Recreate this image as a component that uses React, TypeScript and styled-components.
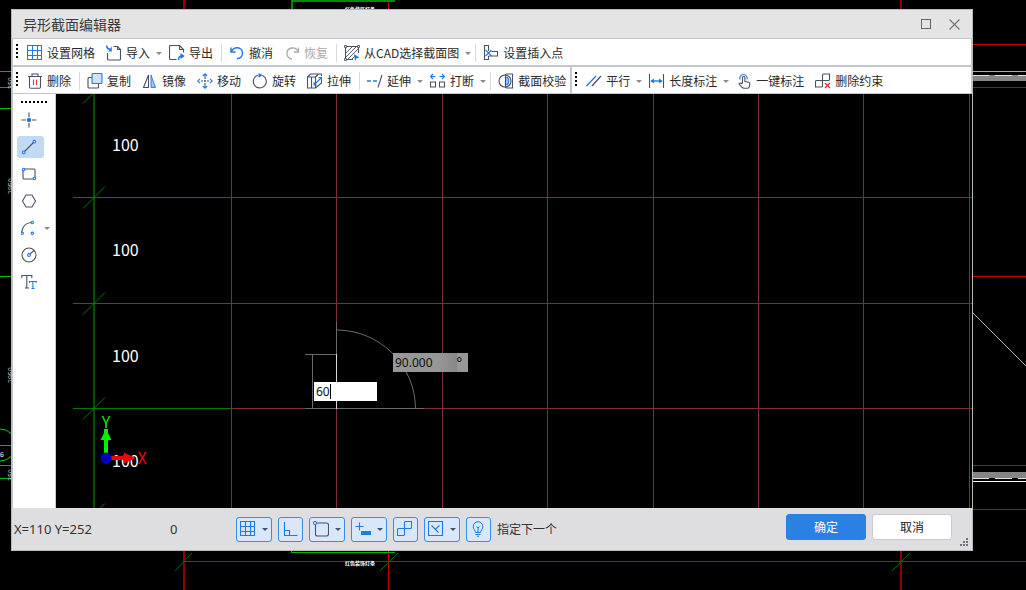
import React from "react";
import styled, { createGlobalStyle, css } from "styled-components";

const GlobalStyle = createGlobalStyle`
  * { box-sizing: border-box; }
  body {
    margin: 0;
    background: #000;
    color: #2b2b2b;
    font-family: "Noto Sans CJK SC", "Noto Sans", sans-serif;
    font-size: 12px;
    line-height: 16px;
  }
  button, input { font: inherit; color: inherit; }
`;

const INK = "#4a5166";
const BLUE = "#1f7ae6";
const RED = "#d9303a";

/* ---------- page and dialog ---------- */

const Desktop = styled.div`
  position: relative;
  display: flex;
  min-height: 100vh;
  padding: 9px 53px 39px 11px;
  overflow: hidden;
`;

const DrawingBehind = styled.svg`
  position: absolute;
  inset: 0;
  width: 100%;
  height: 100%;
`;

const Dialog = styled.section`
  position: relative;
  flex: 1;
  min-width: 0;
  display: flex;
  flex-direction: column;
  background: #dedee0;
  border: 1px solid #b9babd;
`;

const TitleBar = styled.header`
  display: flex;
  align-items: center;
  height: 29px;
  padding: 0 4px 0 11px;
  background: #e4e4e4;
  border-bottom: 1px solid #c3c5ca;
`;

const Title = styled.h1`
  flex: 1;
  margin: 0;
  font-size: 14px;
  line-height: 20px;
  font-weight: 400;
  color: #3a3a3a;
`;

const WindowButton = styled.button`
  display: flex;
  align-items: center;
  justify-content: center;
  width: 28px;
  height: 24px;
  padding: 0;
  border: 0;
  background: none;
`;

/* ---------- toolbars ---------- */

const Toolbars = styled.div`
  border: solid #c3c6cc;
  border-width: 0 1px 1px;
  background: #fff;
`;

const ToolbarRow = styled.div`
  display: flex;
  height: 26px;
  overflow: hidden;
  & + & {
    height: 28px;
    border-top: 2px solid #c3c6cc;
  }
`;

const ToolGroup = styled.div`
  display: flex;
  align-items: center;
  gap: 3px;
  padding: 2px 0 0 3px;
  & + & { border-left: 2px solid #c3c6cc; }
`;

const Grip = styled.span<{ $horizontal?: boolean }>`
  flex: none;
  ${(p) =>
    p.$horizontal
      ? css`
          width: 26px;
          height: 2px;
          margin: 0 0 1px 4px;
          background: repeating-linear-gradient(90deg, #000 0 2px, transparent 2px 4px);
        `
      : css`
          width: 2px;
          height: 14px;
          margin: 0 2px 5px 0;
          background: repeating-linear-gradient(#000 0 2px, transparent 2px 4px);
        `}
`;

const Tool = styled.button`
  display: flex;
  flex: none;
  align-items: center;
  gap: 4px;
  padding: 0 4px;
  border: 0;
  background: none;
  white-space: nowrap;
  &:disabled { color: #a9a9a9; }
`;

const Split = styled.span`
  display: flex;
  flex: none;
  align-items: center;
`;

const CaretButton = styled.button`
  display: flex;
  align-items: center;
  justify-content: flex-end;
  width: 8px;
  height: 16px;
  padding: 0;
  border: 0;
  background: none;
`;

const Caret = styled.span<{ $dark?: boolean }>`
  border: 3px solid transparent;
  border-top-color: ${(p) => (p.$dark ? "#4a5166" : "#8b8b8b")};
  border-bottom: 0;
`;

const Divider = styled.span`
  flex: none;
  width: 1px;
  height: 18px;
  margin-left: 1px;
  background: #d9d9d9;
`;

/* ---------- work area ---------- */

const Work = styled.div`
  flex: 1;
  display: flex;
  min-height: 0;
  padding-left: 1px;
  background: #c3c6cc;
`;

const Palette = styled.nav`
  display: flex;
  flex: none;
  flex-direction: column;
  gap: 5px;
  width: 43px;
  padding: 7px 0 0 4px;
  background: #fff;
  border-right: 1px solid #ccc;
`;

const PaletteTool = styled.button<{ $active?: boolean }>`
  display: flex;
  align-items: center;
  justify-content: center;
  width: 27px;
  height: 22px;
  padding: 0 3px 0 0;
  border: 0;
  border-radius: 3px;
  background: ${(p) => (p.$active ? "#c1d9f2" : "none")};
`;

const Stage = styled.div`
  position: relative;
  flex: 1;
  display: flex;
  min-width: 0;
  background: #000;
`;

const StageDrawing = styled.svg`
  flex: 1;
  min-width: 0;
  height: auto;
  font-family: "Noto Sans CJK SC", "Noto Sans", sans-serif;
`;

const LengthField = styled.label`
  position: absolute;
  left: 258px;
  top: 288px;
  display: flex;
  width: 63px;
  height: 19px;
  background: #fff;
`;

const AngleField = styled.label`
  position: absolute;
  left: 337px;
  top: 259px;
  display: flex;
  width: 75px;
  height: 19px;
  background: linear-gradient(90deg, #979797 0 45px, #878787 64px, #979797 64px);
  color: #111;
`;

const FieldInput = styled.input`
  width: 100%;
  min-width: 0;
  padding: 0 2px;
  border: 0;
  outline: 0;
  background: none;
  color: #111;
  font-family: "Noto Sans", sans-serif;
`;

const TextCursor = styled.span`
  position: absolute;
  left: 16px;
  top: 2px;
  width: 1px;
  height: 15px;
  background: #000;
`;

const Unit = styled.span`
  width: 14px;
  font-family: "Noto Sans", sans-serif;
  font-size: 14px;
  line-height: 20px;
`;

/* ---------- footer ---------- */

const Footer = styled.footer`
  display: flex;
  align-items: center;
  height: 42px;
  padding: 0 20px 0 2px;
  color: #333;
`;

const Readout = styled.output<{ $width: number }>`
  flex: none;
  width: ${(p) => p.$width}px;
  font-family: "Noto Sans", sans-serif;
  font-size: 13px;
`;

const Toggles = styled.div`
  display: flex;
  gap: 6px;
  align-items: center;
`;

const Toggle = styled.button<{ $menu?: boolean }>`
  display: flex;
  flex: none;
  align-items: center;
  justify-content: space-between;
  width: ${(p) => (p.$menu ? 36 : 25)}px;
  height: 25px;
  padding: 0 3px;
  border: 1px solid #3a8bea;
  border-radius: 3px;
  background: #d9e7fb;
`;

const Actions = styled.div`
  display: flex;
  gap: 6px;
  margin: 0 0 4px auto;
`;

const Action = styled.button<{ $primary?: boolean }>`
  width: 80px;
  height: 26px;
  padding: 0;
  border: 1px solid ${(p) => (p.$primary ? "#2b80e4" : "#cbcbcd")};
  border-radius: 3px;
  background: ${(p) => (p.$primary ? "#2b80e4" : "#fff")};
  color: ${(p) => (p.$primary ? "#fff" : "#222")};
`;

const SizeGrip = styled.svg`
  position: absolute;
  right: 3px;
  bottom: 3px;
`;

/* ---------- icons ---------- */

const IconSvg = styled.svg`
  flex: none;
  fill: none;
  stroke: ${INK};
  stroke-width: 1.1;
`;

const Icon = ({ children, size = 16 }: { children: React.ReactNode; size?: number }) => (
  <IconSvg width={size} height={size} viewBox={`0 0 ${size} ${size}`} aria-hidden="true">
    {children}
  </IconSvg>
);

const icons = {
  grid: <path stroke={BLUE} d="M.5.5h14v14H.500zM.5 5.500h14M.5 10.500h14M5.500.5v14M10.500.5v14" />,
  importFile: (
    <>
      <path d="M7.500 1.500h4l3 3V14a1 1 0 0 1-1 1h-11a1 1 0 0 1-1-1V8M11.500 1.500v3h3" />
      <path stroke={BLUE} strokeWidth="1.500" d="M.7.500C.7 3 2 4 4 4" />
      <path fill={BLUE} stroke="none" d="M2.500 6.500L5.800 1.200V6.500z" />
    </>
  ),
  exportFile: (
    <>
      <path d="M7.500 14.500h-6a1 1 0 0 1-1-1v-12a1 1 0 0 1 1-1h9l4 4v3M10.500.5v4h4" />
      <path stroke={BLUE} strokeWidth="1.500" d="M9.500 15c0-3 1-4 3.500-4" />
      <path fill={BLUE} stroke="none" d="M11.500 8l4.300 3-4.300 3z" />
    </>
  ),
  undo: <path stroke={BLUE} strokeWidth="1.400" d="M2 2.500V7h4.500M2 7c1.500-3 4-4.300 6.500-4.200 3 .2 5 2.500 5 5.200 0 3-2.200 5.300-5.500 5.800" />,
  redo: <path stroke="#a9a9a9" strokeWidth="1.300" d="M14.500 2.500V7H10M14.500 7C13 4 10.500 2.700 8 3 5 3.300 3 5.500 3 8.200c0 3 2.200 5.300 5 5.800" />,
  pickSection: (
    <>
      <path d="M3 1.500h10M1.500 3v10M14.500 3v5M3 14.500h6" />
      <path strokeWidth=".9" d="M2 8l6-6M2 12l10-10M4 14L14 4M8 14l3-3" />
      <path fill="#fff" strokeWidth=".9" d="M.5.5h2v2h-2zM13.500.5h2v2h-2zM.5 13.500h2v2h-2z" />
      <path fill={BLUE} stroke="none" d="M10 9l5.500 3.500-3 .8-1.500 2.700z" />
    </>
  ),
  insertPoint: (
    <>
      <path d="M5.500 6V.5h-4v14h4V11M5.500 11h9V6.500h-6" />
      <path stroke={BLUE} d="M2.500 5l6 6M8.500 5l-6 6" />
    </>
  ),
  trash: (
    <>
      <path d="M1 3.500h14M5 3.500V1h6v2.500M2.500 3.500V14a1.200 1.200 0 0 0 1.200 1.200h8.600a1.200 1.200 0 0 0 1.200-1.200V3.500" />
      <path stroke={RED} d="M6.500 6.500V12M9.500 6.500V12" />
    </>
  ),
  copy: (
    <>
      <path d="M5 4.500H2a1 1 0 0 0-1 1V14a1 1 0 0 0 1 1h8.500a1 1 0 0 0 1-1v-3" />
      <rect x="5" y=".5" width="10" height="10" rx="1" fill="#cfe2fa" stroke={BLUE} />
    </>
  ),
  mirror: (
    <>
      <path d="M6.500 2v12.500H1.500z" />
      <path fill="#9cc4f5" stroke={BLUE} strokeWidth=".9" d="M9 2v12.500h4.500z" />
    </>
  ),
  move: (
    <>
      <path strokeDasharray="2 1" d="M8 4v8M4 8h8" />
      <path stroke={BLUE} d="M5.800 3L8 .8 10.200 3M5.800 13L8 15.200 10.200 13M3 5.800L.8 8 3 10.200M13 5.800L15.200 8 13 10.200M8 1v3M8 12v3" />
    </>
  ),
  rotate: (
    <>
      <path d="M6 2.200A6.500 6.500 0 1 0 10.500 2.500" />
      <path fill={BLUE} stroke="none" d="M6.500 0l4.500 2.300-4.500 2.500z" />
    </>
  ),
  stretch: (
    <>
      <path d="M.5 4h8v11h-8zM.5 4l3-3h11v2M8.500 4l3-3M4.500 4v11M8.500 15l6-5V5" />
      <path stroke={BLUE} d="M7 12l7-7M11.500 4.500h3v3M7 9v3h3" />
    </>
  ),
  extend: (
    <>
      <path stroke={BLUE} d="M0 8h4M6 8h4" strokeWidth="1.400" />
      <path d="M11 14.500L15 2" />
    </>
  ),
  breakApart: (
    <>
      <path d="M.5 9h5v5h-5zM9.500 9h5v5h-5z" />
      <path stroke={BLUE} d="M5.500 3.500h-5M3 1L.6 3.500 3 6M9.500 3.500h5M12 1l2.400 2.500L12 6" />
    </>
  ),
  verify: (
    <>
      <path d="M8 1h6.500v14H8" />
      <circle cx="7" cy="8" r="6" />
      <path fill="#9cc4f5" stroke={BLUE} d="M7.500 4c4.500.5 4.500 7.500 0 8z" />
      <path d="M7.500 1v14" />
    </>
  ),
  parallel: (
    <>
      <path stroke={BLUE} d="M.5 13L10 3" strokeWidth="1.300" />
      <path d="M6 13l9-10" strokeWidth="1.300" />
    </>
  ),
  lengthDim: (
    <>
      <path d="M.5 1v14M14.500 1v14" />
      <path stroke={BLUE} d="M2 8h11" strokeWidth="1.400" />
      <path fill={BLUE} stroke="none" d="M1.500 8L5 5.500v5zM13.500 8L10 5.500v5z" />
    </>
  ),
  oneClick: (
    <>
      <path stroke={BLUE} d="M4 6.500a3.700 3.700 0 1 1 7-.2" />
      <path d="M6.500 10V4.500a1.200 1.200 0 0 1 2.400 0v4l4 .8c.8.200 1 .7 1 1.400l-.6 3c-.2.800-.7 1.500-1.600 1.500H8c-1 0-1.600-.3-2.200-1L3 11c.8-1.300 2.500-1 3.500 0" />
    </>
  ),
  removeConstraint: (
    <>
      <path d="M7.500 7.500V2a1 1 0 0 1 1-1h6v5.500a1 1 0 0 1-1 1H1.500a1 1 0 0 0-1 1V14h6a1 1 0 0 0 1-1z" />
      <path stroke="#fff" strokeWidth="3" d="M10 10l5 5M15 10l-5 5" />
      <path stroke={RED} strokeWidth="1.400" d="M10 10l5 5M15 10l-5 5" />
    </>
  ),
  point: (
    <>
      <path d="M8 .5V5M8 11v4.500M.5 8H5M11 8h4.500" />
      <circle cx="8" cy="8" r="2.200" fill={BLUE} stroke="none" />
    </>
  ),
  line: (
    <>
      <path d="M3.500 12.500l9-9" />
      <g stroke={BLUE} fill="#fff"><circle cx="2.700" cy="13.300" r="1.300" /><circle cx="13.300" cy="2.700" r="1.300" /></g>
    </>
  ),
  rectangle: (
    <>
      <rect x="2" y="3" width="12" height="10" rx="1" />
      <g stroke={BLUE} fill="#fff"><circle cx="2.700" cy="3.500" r="1.200" /><circle cx="13.300" cy="12.500" r="1.200" /></g>
    </>
  ),
  polygon: <path d="M5 2h6l3.500 6-3.500 6H5L1.500 8z" />,
  arc: (
    <>
      <path d="M.7 12C1.500 6.500 4.500 3 10 2.500" />
      <g stroke={BLUE} fill="#fff"><circle cx="1.200" cy="13.300" r="1.200" /><circle cx="11.300" cy="2.500" r="1.200" /><circle cx="11.300" cy="13.300" r="1.200" /></g>
    </>
  ),
  circle: (
    <>
      <circle cx="8" cy="8" r="7" />
      <path d="M9 7l4-3.500" />
      <circle cx="8" cy="8" r="1.400" fill="#fff" stroke={BLUE} />
    </>
  ),
  text: (
    <>
      <path d="M.8 4V1.500h10V4M5.800 1.500v12.500M4 14h4" />
      <path stroke={BLUE} d="M8.500 9V7.500h6.700V9M11.900 7.500v7M10.500 14.500h3" />
    </>
  ),
  ortho: <path stroke={BLUE} d="M2.500 1v13.500h13M2.500 9.500h5v5" />,
  snap: (
    <>
      <rect x="2.500" y="2" width="13" height="13" rx="2" />
      <circle cx="2" cy="2" r="1.500" stroke={BLUE} fill="#fff" />
    </>
  ),
  dynamicInput: (
    <>
      <path stroke={BLUE} d="M.5 5.500h8M4.500 1.500v8" />
      <rect x="6" y="10" width="10" height="4" fill={BLUE} stroke="none" />
    </>
  ),
  constraint: <path stroke={BLUE} d="M7.500 7.500v-6a1 1 0 0 1 1-1h6v6a1 1 0 0 1-1 1h-12a1 1 0 0 0-1 1v6h6a1 1 0 0 0 1-1z" />,
  track: <path stroke={BLUE} d="M.5.5h14v14H.500zM3.500 4.500l7 7M11.500 4.500l-4.500 4" />,
  bulb: <path stroke={BLUE} strokeWidth="1" d="M5.500 11.500C5.500 9.500 3.200 8.500 3.200 5.500a4.800 4.800 0 0 1 9.600 0c0 3-2.300 4-2.300 6zM5.500 13.500h5M7 15.200h2M6.500 5.500L8 7l1.500-1.500M8 7v4" />,
};

type IconName = keyof typeof icons;

interface ToolSpec {
  icon?: IconName;
  label?: string;
  menu?: boolean;
  disabled?: boolean;
}

const DIVIDER: ToolSpec = {};

const fileTools: ToolSpec[] = [
  { icon: "grid", label: "设置网格" },
  { icon: "importFile", label: "导入", menu: true },
  { icon: "exportFile", label: "导出" },
  DIVIDER,
  { icon: "undo", label: "撤消" },
  { icon: "redo", label: "恢复", disabled: true },
  DIVIDER,
  { icon: "pickSection", label: "从CAD选择截面图", menu: true },
  DIVIDER,
  { icon: "insertPoint", label: "设置插入点" },
];

const editTools: ToolSpec[] = [
  { icon: "trash", label: "删除" },
  DIVIDER,
  { icon: "copy", label: "复制" },
  { icon: "mirror", label: "镜像" },
  { icon: "move", label: "移动" },
  { icon: "rotate", label: "旋转" },
  { icon: "stretch", label: "拉伸" },
  DIVIDER,
  { icon: "extend", label: "延伸", menu: true },
  { icon: "breakApart", label: "打断", menu: true },
  DIVIDER,
  { icon: "verify", label: "截面校验" },
];

const constraintTools: ToolSpec[] = [
  { icon: "parallel", label: "平行", menu: true },
  { icon: "lengthDim", label: "长度标注", menu: true },
  { icon: "oneClick", label: "一键标注" },
  { icon: "removeConstraint", label: "删除约束" },
];

const paletteTools: { icon: IconName; label: string; menu?: boolean }[] = [
  { icon: "point", label: "点" },
  { icon: "line", label: "直线" },
  { icon: "rectangle", label: "矩形" },
  { icon: "polygon", label: "多边形" },
  { icon: "arc", label: "圆弧", menu: true },
  { icon: "circle", label: "圆" },
  { icon: "text", label: "文字" },
];

const statusToggles: { icon: IconName; label: string; menu?: boolean }[] = [
  { icon: "grid", label: "网格", menu: true },
  { icon: "ortho", label: "正交" },
  { icon: "snap", label: "捕捉", menu: true },
  { icon: "dynamicInput", label: "动态输入", menu: true },
  { icon: "constraint", label: "约束" },
  { icon: "track", label: "追踪", menu: true },
  { icon: "bulb", label: "提示" },
];

const ToolList = ({ tools }: { tools: ToolSpec[] }) => (
  <ToolGroup>
    <Grip />
    {tools.map((tool, i) =>
      tool.icon ? (
        <Split key={i}>
          <Tool disabled={tool.disabled}>
            <Icon>{icons[tool.icon]}</Icon>
            {tool.label}
          </Tool>
          {tool.menu && (
            <CaretButton aria-label={`${tool.label}选项`}>
              <Caret />
            </CaretButton>
          )}
        </Split>
      ) : (
        <Divider key={i} />
      )
    )}
  </ToolGroup>
);

/* ---------- CAD drawings ---------- */

const CELL = 105.4;
const columns = Array.from({ length: 20 }, (_, i) => Math.round(175 + i * CELL) + 0.5);
const rows = Array.from({ length: 12 }, (_, i) => Math.round(-2 + i * CELL) + 0.5);
const labelledRows = rows.slice(0, 4);

const SectionDrawing = () => (
  <StageDrawing aria-label="截面绘图区">
    <g stroke="#7a3034" shapeRendering="crispEdges">
      {columns.map((x) => <line key={x} x1={x} x2={x} y1="0" y2="100%" />)}
      {rows.map((y) => <line key={y} x1="175" x2="100%" y1={y} y2={y} />)}
    </g>
    <line x1="38" x2="38" y1="0" y2="100%" stroke="#005000" strokeWidth="2" />
    {rows.map((y) => (
      <g key={y} stroke="#007c00">
        <line x1="17" x2="175" y1={y} y2={y} shapeRendering="crispEdges" />
        <line x1="27" x2="49" y1={y + 11} y2={y - 11} />
      </g>
    ))}
    <g fill="#fff" fontSize="16">
      {labelledRows.map((y) => <text key={y} x="56" y={y + 58}>100</text>)}
    </g>

    <g stroke="#6a6a6a" fill="none">
      <path shapeRendering="crispEdges" d="M280.500 228v32M249 260.500h32M256.500 260v55M249 314.500h119" />
      <path d="M280.500 236a79 79 0 0 1 79 79" />
      <path stroke="#d8d8d8" shapeRendering="crispEdges" d="M280.500 260v55" />
    </g>

    <path d="M48 335h4v30h-4z" fill="#00f000" />
    <path d="M50 335l5.500 11h-11z" fill="#00f000" />
    <path d="M52 362h16v4H52z" fill="#f00000" />
    <path d="M68 358.500l12 5.500-12 5.500z" fill="#f00000" />
    <circle cx="50" cy="364" r="5.500" fill="#0000c0" />
    <text x="50" y="334" fontSize="16" textAnchor="middle" fill="#00f000">Y</text>
    <text x="86" y="370" fontSize="16" textAnchor="middle" fill="#f00000">X</text>
  </StageDrawing>
);

const BuildingPlan = () => (
  <DrawingBehind aria-hidden="true">
    <g stroke="#8e0000" strokeWidth="2">
      <path d="M184 0v590M901 0v590" />
    </g>
    <g stroke="#c40000" shapeRendering="crispEdges">
      <path d="M388.500 0v590M970 44.500h56M970 87.500h56M970 276.500h56M970 465.500h56M970 509.500h56" />
    </g>
    <g stroke="#008a00" fill="none" shapeRendering="crispEdges">
      <path strokeWidth="2" d="M292 10V1h103" />
      <path stroke="#00b800" d="M291.500 550v2.500H395M0 71.500h12M0 87.500h12M0 108.500h12M0 276.500h12M0 445.500h12M0 465.500h12M0 478.500h12" />
      <path stroke="#006c00" d="M184 561.500h842" />
    </g>
    <g stroke="#006c00" fill="none">
      <path d="M175 571l17-18M380 571l18-18M892 571l18-18" />
      <circle cx="0" cy="445" r="16" stroke="#00d000" />
    </g>
    <g fill="#fff" fontSize="5" fontWeight="700">
      <text x="345" y="11">红色装饰灯条</text>
      <text x="345" y="565">红色装饰灯条</text>
    </g>
    <g fill="#ccc" fontSize="7">
      <text transform="translate(13 89) rotate(-90)">350</text>
      <text transform="translate(13 194) rotate(-90)">2950</text>
      <text transform="translate(13 383) rotate(-90)">2950</text>
      <text transform="translate(13 481) rotate(-90)">350</text>
    </g>
    <text x="0" y="457" fontSize="7" fill="#fff">6</text>
    <g shapeRendering="crispEdges">
      <path fill="#858585" d="M970 75h56v6h-56zM970 472h56v6h-56z" />
      <path stroke="#aaa" d="M970 71.500h56" />
      <path stroke="#e0e0e0" strokeDasharray="17 6" d="M972 75.500h54M972 478.500h54" />
      <path stroke="#fff" d="M970 481.500h56" />
    </g>
    <path stroke="#b5b5b5" d="M973 313l60 60" />
  </DrawingBehind>
);

export default function App() {
  return (
    <Desktop>
      <GlobalStyle />
      <BuildingPlan />
      <Dialog role="dialog" aria-labelledby="editor-title">
        <TitleBar>
          <Title id="editor-title">异形截面编辑器</Title>
          <WindowButton aria-label="最大化">
            <svg width="10" height="10" fill="none" stroke="#666">
              <rect x=".5" y=".5" width="9" height="9" />
            </svg>
          </WindowButton>
          <WindowButton aria-label="关闭">
            <svg width="11" height="11" stroke="#777" strokeWidth="1.200">
              <path d="M.5.5l10 10M10.500.5l-10 10" />
            </svg>
          </WindowButton>
        </TitleBar>

        <Toolbars>
          <ToolbarRow>
            <ToolList tools={fileTools} />
          </ToolbarRow>
          <ToolbarRow>
            <ToolList tools={editTools} />
            <ToolList tools={constraintTools} />
          </ToolbarRow>
        </Toolbars>

        <Work>
          <Palette aria-label="绘图工具">
            <Grip $horizontal />
            {paletteTools.map((tool) => (
              <Split key={tool.icon}>
                <PaletteTool aria-label={tool.label} $active={tool.icon === "line"}>
                  <Icon>{icons[tool.icon]}</Icon>
                </PaletteTool>
                {tool.menu && <Caret />}
              </Split>
            ))}
          </Palette>
          <Stage>
            <SectionDrawing />
            <LengthField>
              <FieldInput aria-label="长度" defaultValue="60" />
              <TextCursor />
            </LengthField>
            <AngleField>
              <FieldInput aria-label="角度" defaultValue="90.000" />
              <Unit>°</Unit>
            </AngleField>
          </Stage>
        </Work>

        <Footer>
          <Readout $width={156}>X=110 Y=252</Readout>
          <Readout $width={66}>0</Readout>
          <Toggles>
            {statusToggles.map((toggle) => (
              <Toggle key={toggle.icon} $menu={toggle.menu} aria-label={toggle.label}>
                <Icon>{icons[toggle.icon]}</Icon>
                {toggle.menu && <Caret $dark />}
              </Toggle>
            ))}
            <span>指定下一个</span>
          </Toggles>
          <Actions>
            <Action $primary>确定</Action>
            <Action>取消</Action>
          </Actions>
        </Footer>
        <SizeGrip width="9" height="9" fill="#6c7280" aria-hidden="true">
          <path d="M6 0h2v2H6zM3 3h2v2H3zM6 3h2v2H6zM0 6h2v2H0zM3 6h2v2H3zM6 6h2v2H6z" />
        </SizeGrip>
      </Dialog>
    </Desktop>
  );
}
